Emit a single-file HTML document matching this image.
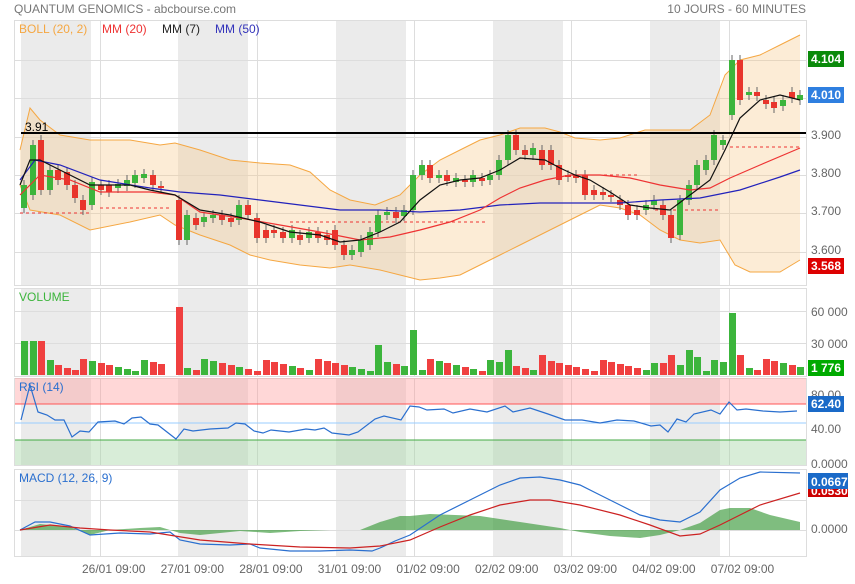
<!DOCTYPE html>
<html><head><meta charset="utf-8"><style>
body{margin:0;background:#fff;width:855px;height:579px;overflow:hidden;font-family:"Liberation Sans",Arial,sans-serif}
svg text{font-family:"Liberation Sans",Arial,sans-serif}
</style></head><body>
<svg id="s" width="855" height="579" xmlns="http://www.w3.org/2000/svg">
<text x="14" y="13" font-size="12" fill="#777">QUANTUM GENOMICS - abcbourse.com</text>
<text x="806" y="13" font-size="12" fill="#777" text-anchor="end">10 JOURS - 60 MINUTES</text>
<g id="bg"></g>
<g id="main"></g>
</svg>
<script>
var s=document.getElementById('bg'),m=document.getElementById('main');
var h='';
var panels=[[20,285],[288,376],[378,465],[469,556]];
panels.forEach(function(p){h+='<rect x="14.5" y="'+(p[0]+.5)+'" width="792" height="'+(p[1]-p[0])+'" fill="#fff" stroke="#ddd"/>';});
// bands
[[21,91],[178,248],[336,406],[493,563],[650,720]].forEach(function(b){panels.forEach(function(p){h+='<rect x="'+b[0]+'" y="'+(p[0]+1)+'" width="'+(b[1]-b[0])+'" height="'+(p[1]-p[0]-1)+'" fill="#ebebeb"/>';});});
// vertical grid
[100,257,414,571,729].forEach(function(x){panels.forEach(function(p){h+='<line x1="'+x+'.5" x2="'+x+'.5" y1="'+p[0]+'" y2="'+p[1]+'" stroke="#ddd"/>';});});
// horizontal grids main
[60,98,137,175,213,252].forEach(function(y){h+='<line x1="14" x2="806" y1="'+y+'.5" y2="'+y+'.5" stroke="#ddd"/>';});
[311,343].forEach(function(y){h+='<line x1="14" x2="806" y1="'+y+'.5" y2="'+y+'.5" stroke="#ddd"/>';});
[500,530].forEach(function(y){h+='<line x1="14" x2="806" y1="'+y+'.5" y2="'+y+'.5" stroke="#ddd"/>';});
// RSI zones
h+='<rect x="15" y="378" width="791" height="26" fill="#ff9b9b" fill-opacity=".4"/>';
h+='<rect x="15" y="440" width="791" height="25" fill="#a8d8a8" fill-opacity=".45"/>';
h+='<line x1="15" x2="806" y1="404" y2="404" stroke="#f55"/>';
h+='<line x1="15" x2="806" y1="423" y2="423" stroke="#9cf"/>';
h+='<line x1="15" x2="806" y1="440" y2="440" stroke="#4a4"/>';
s.innerHTML=h;
function P(a){return a.map(function(p){return p[0]+','+p[1]}).join(' ');}
var up=[[20,150],[30,108],[40,120],[60,135],[90,140],[130,140],[160,145],[175,143],[200,150],[230,160],[260,163],[290,165],[310,172],[330,190],[350,200],[375,205],[400,195],[420,175],[440,160],[460,150],[480,140],[500,135],[520,128],[545,128],[560,132],[575,138],[600,140],[620,138],[645,130],[670,130],[690,130],[710,115],[725,75],[740,60],[760,55],[780,45],[800,35]];
var lo=[[20,185],[30,210],[60,215],[90,230],[130,222],[160,215],[175,225],[200,235],[230,245],[250,255],[270,260],[300,265],[330,268],[350,265],[380,270],[400,275],[420,280],[440,278],[460,275],[480,265],[500,255],[520,245],[540,235],[560,225],[580,215],[600,205],[620,208],[640,215],[660,230],[680,240],[700,243],[720,240],[735,265],[750,272],[780,272],[800,260]];
var g='';
g+='<polygon points="'+P(up)+' '+P(lo.slice().reverse())+'" fill="#f7c88a" fill-opacity=".35"/>';
g+='<polyline points="'+P(up)+'" fill="none" stroke="#f5a742"/><polyline points="'+P(lo)+'" fill="none" stroke="#f5a742"/>';
[[20,90,213],[100,170,208],[290,485,222],[580,640,175],[655,720,210],[730,800,147]].forEach(function(d){g+='<line x1="'+d[0]+'" x2="'+d[1]+'" y1="'+d[2]+'" y2="'+d[2]+'" stroke="#e33" stroke-dasharray="3,3"/>';});
var C=[[21,208,185],[30,195,145],[38,140,190],[47,190,170],[55,170,180],[64,172,185],[72,185,198],[80,200,210],[89,205,182],[98,185,190],[106,185,192],[115,188,184],[124,186,180],[132,183,175],[141,178,174],[150,175,185],[158,186,187],[176,200,240],[184,240,215],[193,218,225],[201,222,217],[210,218,215],[219,215,220],[228,218,222],[236,220,205],[245,205,215],[254,218,238],[263,230,238],[271,230,233],[280,232,238],[289,238,230],[297,235,240],[306,238,232],[315,232,238],[324,235,240],[332,230,245],[341,245,255],[349,255,250],[358,252,240],[367,245,232],[375,232,215],[384,215,212],[393,212,218],[401,216,210],[410,210,175],[419,175,165],[427,165,178],[436,178,175],[444,175,181],[453,182,178],[462,180,182],[470,182,175],[479,178,181],[487,180,175],[496,175,160],[505,160,135],[513,135,150],[522,150,155],[530,155,148],[539,150,165],[548,150,165],[556,165,180],[565,175,176],[573,175,178],[582,175,195],[591,190,195],[600,192,195],[608,195,197],[617,200,205],[625,205,215],[634,210,215],[643,210,205],[651,205,200],[660,205,215],[668,215,238],[677,235,200],[686,200,185],[694,185,165],[703,170,160],[711,160,135],[720,145,140],[729,115,60],[737,60,100],[746,95,92],[754,92,96],[763,100,104],[771,102,108],[780,106,100],[789,92,98],[797,100,95]];
C.forEach(function(c){var gr=c[2]<=c[1],col=gr?'#3cb53c':'#e8352c',t=Math.min(c[1],c[2]),b=Math.max(c[1],c[2]);if(b-t<2){b=t+2;}
g+='<line x1="'+(c[0]+3)+'" x2="'+(c[0]+3)+'" y1="'+(t-5)+'" y2="'+(b+5)+'" stroke="#666"/>';
g+='<rect x="'+c[0]+'" y="'+t+'" width="6" height="'+(b-t)+'" fill="'+col+'"/>';});
var mm20=[[20,195],[40,175],[70,180],[100,192],[150,192],[175,195],[200,212],[240,218],[280,225],[320,232],[360,240],[390,237],[420,230],[450,222],[480,210],[500,198],[520,188],[545,180],[570,175],[600,175],[630,178],[660,185],[690,190],[710,188],[730,178],[760,165],[800,148]];
var mm50=[[20,180],[35,160],[60,165],[100,180],[150,188],[180,192],[220,195],[260,200],[300,205],[340,210],[380,210],[420,212],[460,210],[500,205],[540,203],[580,203],[620,203],[660,200],[700,198],[740,190],[780,177],[800,170]];
var mm7=[[20,185],[30,160],[40,160],[60,170],[90,185],[130,185],[150,190],[175,195],[200,210],[230,215],[260,222],[290,232],[320,235],[340,242],[360,240],[380,232],[400,222],[420,200],[440,185],[460,180],[480,178],[500,170],[520,158],[545,160],[560,168],[575,175],[590,180],[610,192],[630,205],[650,208],[670,210],[690,195],[710,180],[725,150],[740,118],[760,100],[780,95],[800,100]];
g+='<polyline points="'+P(mm50)+'" fill="none" stroke="#22b" stroke-width="1.2"/>';
g+='<polyline points="'+P(mm20)+'" fill="none" stroke="#e33" stroke-width="1.2"/>';
g+='<polyline points="'+P(mm7)+'" fill="none" stroke="#111" stroke-width="1.2"/>';
g+='<line x1="21" x2="806" y1="133" y2="133" stroke="#000" stroke-width="2"/><text x="25" y="131" font-size="12">3.91</text>';
g+='<text x="19" y="33" font-size="12" fill="#f5a742">BOLL (20, 2)</text><text x="102" y="33" font-size="12" fill="#e33">MM (20)</text><text x="162" y="33" font-size="12" fill="#222">MM (7)</text><text x="215" y="33" font-size="12" fill="#33b">MM (50)</text>';
// volume
var V={21:34,30:34,38:34,176:68,361:40,410:45,375:30,505:25,539:20,729:62,737:20,686:25,668:20,47:15,55:10,255:18,232:12,420:18,547:18,694:18,712:15,651:12,660:12};
C.forEach(function(c,i){var gr=c[2]<=c[1];var v=V[c[0]]||(4+((i*37)%13));g+='<rect x="'+c[0]+'" y="'+(375-v)+'" width="7" height="'+v+'" fill="'+(gr?'#3cb53c':'#f04040')+'"/>';});
g+='<text x="19" y="301" font-size="12" fill="#3cb53c">VOLUME</text>';
// RSI
var rsi=[[21,420],[30,385],[38,412],[47,415],[55,420],[64,420],[72,437],[80,431],[89,432],[98,422],[115,421],[124,424],[132,418],[141,417],[150,424],[158,425],[176,439],[184,429],[193,431],[210,429],[228,428],[236,423],[245,424],[254,431],[263,433],[271,430],[289,432],[306,429],[315,430],[324,428],[332,433],[349,435],[358,432],[375,419],[384,416],[401,420],[410,406],[419,407],[427,410],[444,409],[453,413],[470,409],[487,412],[505,406],[513,412],[530,408],[548,414],[565,420],[582,420],[600,423],[617,420],[634,421],[651,426],[660,425],[668,432],[677,419],[686,422],[694,414],[711,410],[720,414],[729,402],[737,410],[746,409],[763,411],[780,412],[797,411]];
g+='<polyline points="'+P(rsi)+'" fill="none" stroke="#2a6fcf" stroke-width="1.2"/>';
g+='<text x="19" y="391" font-size="12" fill="#2a6fcf">RSI (14)</text>';
// MACD
var mb=[[20,530],[35,522],[50,522],[70,526],[90,535],[120,533],[150,534],[170,532],[180,540],[200,544],[230,545],[250,544],[260,548],[290,551],[320,551],[350,550],[372,551],[380,548],[395,541],[410,535],[440,515],[470,500],[500,485],[520,478],[540,477],[560,480],[580,485],[600,495],[620,505],[640,515],[660,520],[680,522],[700,512],[720,490],[740,478],[760,472],[800,473]];
var mr=[[20,530],[50,525],[80,528],[110,530],[150,532],[175,536],[200,540],[250,544],[300,547],[350,548],[380,546],[410,540],[440,527],[470,515],[500,505],[530,500],[550,500],[580,505],[620,515],[650,525],[680,536],[700,534],[720,525],[740,515],[760,505],[800,493]];
var hist=[[20,530],[40,524],[70,527],[90,535],[110,530],[140,528],[160,527],[180,533],[200,535],[240,531],[270,533],[300,531],[330,530],[360,530],[380,522],[400,516],[410,516],[430,514],[480,516],[520,522],[560,528],[580,532],[610,536],[640,538],[660,535],[680,530],[700,523],[720,510],[730,508],[750,508],[770,515],[800,522],[800,530]];
g+='<polygon points="'+P(hist)+'" fill="#3a9a3a" fill-opacity=".65"/>';
g+='<polyline points="'+P(mb)+'" fill="none" stroke="#2a6fcf" stroke-width="1.2"/>';
g+='<polyline points="'+P(mr)+'" fill="none" stroke="#c22" stroke-width="1.2"/>';
g+='<text x="19" y="482" font-size="12" fill="#2a6fcf">MACD (12, 26, 9)</text>';
// axis labels
function L(x,y,t){g+='<text x="'+x+'" y="'+y+'" font-size="12" fill="#666">'+t+'</text>';}
L(811,139,'3.900');L(811,177,'3.800');L(811,215,'3.700');L(811,254,'3.600');
L(811,316,'60 000');L(811,348,'30 000');
L(811,399,'80.00');L(811,433,'40.00');L(811,468,'0.0000');L(811,533,'0.0000');
function B(y,c,t){g+='<rect x="808" y="'+y+'" width="36" height="16" fill="'+c+'"/><text x="811" y="'+(y+12)+'" font-size="12" font-weight="bold" fill="#fff">'+t+'</text>';}
B(51,'#0a8a0a','4.104');B(87,'#2f7fe0','4.010');B(258,'#d00','3.568');B(360,'#0a0','1 776');B(396,'#1a6ac8','62.40');
g+='<rect x="808" y="484" width="40" height="13" fill="#c00"/><text x="811" y="495" font-size="12" font-weight="bold" fill="#fff">0.0530</text>';
g+='<rect x="808" y="473" width="40" height="16" fill="#1a6ac8"/><text x="811" y="486" font-size="12" font-weight="bold" fill="#fff">0.0667</text>';
['26/01 09:00','27/01 09:00','28/01 09:00','31/01 09:00','01/02 09:00','02/02 09:00','03/02 09:00','04/02 09:00','07/02 09:00'].forEach(function(t,i){L(82+i*78.6,573,t);});
m.innerHTML=g;
</script>
</body></html>
